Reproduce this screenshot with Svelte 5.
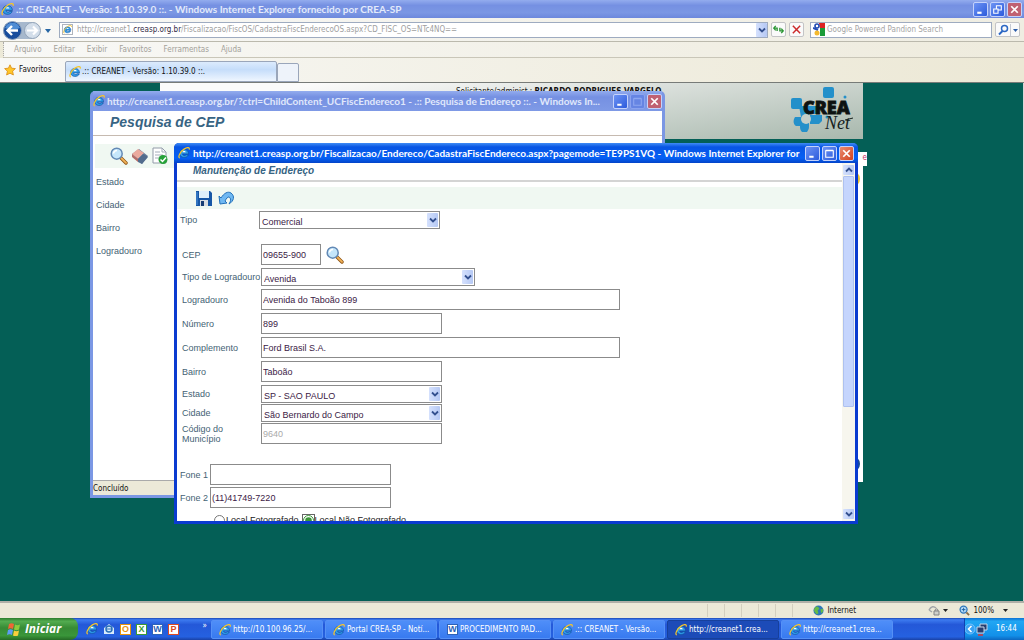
<script lang="ts">
	let address = $state({
		type: 'Comercial',
		cep: '09655-900',
		streetType: 'Avenida',
		phone1: '',
		phone2: '(11)41749-7220',
		photo: 'no'
	});
	const menus = ['Arquivo', 'Editar', 'Exibir', 'Favoritos', 'Ferramentas', 'Ajuda'];
	const fields = [
		{ id: 'logradouro', label: 'Logradouro', value: 'Avenida do Taboão 899', size: 'long' },
		{ id: 'numero', label: 'Número', value: '899', size: 'mid' },
		{ id: 'complemento', label: 'Complemento', value: 'Ford Brasil S.A.', size: 'long' },
		{ id: 'bairro', label: 'Bairro', value: 'Taboão', size: 'mid' }
	];
	const tasks = [
		{ text: 'http://10.100.96.25/...', icon: 'ie' },
		{ text: 'Portal CREA-SP - Notí...', icon: 'ie' },
		{ text: 'PROCEDIMENTO PAD...', icon: 'word' },
		{ text: '.:: CREANET - Versão...', icon: 'ie' },
		{ text: 'http://creanet1.crea...', icon: 'ie', active: true },
		{ text: 'http://creanet1.crea...', icon: 'ie' }
	];
	const office = [
		{ letter: 'O', color: '#e8930c' },
		{ letter: 'X', color: '#3c9a35' },
		{ letter: 'W', color: '#2d62b8' },
		{ letter: 'P', color: '#dc4a24' }
	];
</script>

{#snippet ie(size)}
	<svg class="icon" width={size} height={size} viewBox="0 0 16 16" aria-hidden="true">
		<path d="M14 9.200H6c.4 2.600 3.800 2.800 4.800 1.200h3C12 15.600 2.200 15.200 2.200 8.500 2.200 1.400 14.200 1.200 14 9.200z" fill="#2f9be8" stroke="#0c4b9b" stroke-width=".8" />
		<path d="M6 6.900h4.400c-.4-2-3.800-2.200-4.400 0z" fill="#fff" />
		<path d="M2.500 14.500C-1 14 3 6 8.500 2.500 12 .3 15.800-.3 15 3.500" fill="none" stroke="#f5c52c" stroke-width="1.600" />
	</svg>
{/snippet}

{#snippet lens(size)}
	<svg class="icon" width={size} height={size} viewBox="0 0 18 18" aria-hidden="true">
		<path d="M10.500 10.500l5.500 5.500" stroke="#8f5513" stroke-width="3.400" stroke-linecap="round" />
		<path d="M11.500 11.300l4.500 4.500" stroke="#f2b35a" stroke-width="1.900" stroke-linecap="round" />
		<circle cx="6.700" cy="6.700" r="5.500" fill="#c5e6fb" stroke="#6389b5" stroke-width="1.500" />
		<path d="M3.500 6.500c.3-2 1.500-3 3.500-3" fill="none" stroke="#fff" stroke-width="1.500" />
	</svg>
{/snippet}

{#snippet chevron(up)}
	<svg class="icon" width="8" height="6" viewBox="0 0 8 6" aria-hidden="true">
		<path d={up ? 'M1 4.500l3-3 3 3' : 'M1 1.500l3 3 3-3'} fill="none" stroke="#33508f" stroke-width="1.800" />
	</svg>
{/snippet}

{#snippet combo(id, value, size)}
	<div class="combo {size}">
		<select {id}><option>{value}</option></select>
		<span class="drop">{@render chevron(false)}</span>
	</div>
{/snippet}

{#snippet controls(middle, muted)}
	<div class="controls">
		<button aria-label="Minimizar"><svg viewBox="0 0 12 12"><path d="M3 9h4" stroke="#fff" stroke-width="2" /></svg></button>
		<button aria-label="Maximizar" class:muted>
			<svg viewBox="0 0 12 12" fill="none" stroke={muted ? '#8da6f0' : '#fff'}>
				{#if middle === 'restore'}
					<path d="M2.500 5.500h4v4h-4zM5 5V2.500h4.500v4H7" />
				{:else}
					<path d="M2.500 3.500h7v6h-7zM2.500 3h7" />
				{/if}
			</svg>
		</button>
		<button aria-label="Fechar" class="close"><svg viewBox="0 0 12 12"><path d="M3 3l6 6M9 3L3 9" stroke="#fff" stroke-width="1.600" /></svg></button>
	</div>
{/snippet}

<div class="screen">
	<header class="titlebar">
		{@render ie(13)}
		<span class="title">.:: CREANET - Versão: 1.10.39.0 ::. - Windows Internet Explorer fornecido por CREA-SP</span>
		{@render controls('restore', false)}
	</header>

	<div class="addressbar">
		<svg class="nav-buttons" width="54" height="22" viewBox="0 0 54 22" aria-hidden="true">
			<rect x="3" y="3" width="37" height="17" rx="8.500" fill="#a6b8cd" />
			<circle cx="12.500" cy="11.500" r="9" fill="#174c9c" stroke="#8fa3bd" />
			<path d="M5 9a8 8 0 0 1 15 0c-5 2-10 2-15 0z" fill="#4f8cd4" />
			<path d="M18 11.500H8M12 7l-4.500 4.500L12 16" fill="none" stroke="#fff" stroke-width="2.400" />
			<circle cx="32.500" cy="11.500" r="8" fill="#d3deea" stroke="#93a4b8" />
			<path d="M27 11.500h9M33 7.500l4 4-4 4" fill="none" stroke="#fff" stroke-width="2.200" />
			<path d="M45 10h6l-3 4z" fill="#2766a4" />
		</svg>
		<div class="urlbox">
			<span class="page">{@render ie(9)}</span>
			<span class="url">http://creanet1.<b>creasp.org.br</b>/Fiscalizacao/FiscOS/CadastraFiscEnderecoOS.aspx?CD_FISC_OS=NTc4NQ==</span>
			<span class="drop">{@render chevron(false)}</span>
		</div>
		<button class="tool" aria-label="Atualizar">
			<svg width="11" height="11" viewBox="0 0 12 12" fill="none" stroke="#2b9634" stroke-width="1.500"><path d="M4.500 7.500V4.500H1M3 2L.8 4.500 3 7M7.500 4v3.500H11M9 5l2.200 2.500L9 10" /></svg>
		</button>
		<button class="tool" aria-label="Parar">
			<svg width="11" height="11" viewBox="0 0 12 12"><path d="M2 2l8 8M10 2l-8 8" stroke="#cc2929" stroke-width="1.600" /></svg>
		</button>
		<div class="search">
			<svg width="12" height="13" viewBox="0 0 12 13" aria-hidden="true">
				<path d="M6 0h6v5H7z" fill="#dd2222" /><path d="M7 5h5v8H7z" fill="#1b9b38" />
				<circle cx="4" cy="3" r="2" fill="none" stroke="#244eb5" stroke-width="1.600" />
				<path d="M0 5l5 2" stroke="#244eb5" stroke-width="2" />
				<circle cx="4" cy="10" r="2.500" fill="#f4b92f" />
			</svg>
			<input aria-label="Busca" placeholder="Google Powered Pandion Search" />
		</div>
		<button class="tool go" aria-label="Buscar">
			<svg width="22" height="12" viewBox="0 0 22 12"><circle cx="7.500" cy="4.500" r="3" fill="none" stroke="#2b67c4" stroke-width="1.500" /><path d="M5.500 7L2 10.500" stroke="#2b67c4" stroke-width="2" /><path d="M13.500 0v12" stroke="#c5c9d2" /><path d="M16 5h5l-2.500 3z" fill="#2b5ca8" /></svg>
		</button>
	</div>

	<nav class="menubar">
		{#each menus as menu}
			<a href="#{menu.toLowerCase()}">{menu}</a>
		{/each}
	</nav>

	<div class="tabs">
		<button class="favorites">
			<svg width="12" height="12" viewBox="0 0 12 12" aria-hidden="true"><path d="M6 .8l1.600 3.400 3.800.4-2.800 2.600.8 3.800L6 9.200 2.600 11l.8-3.800L.6 4.600l3.800-.4z" fill="#ffc629" stroke="#d98a12" stroke-width=".8" /></svg>
			Favoritos
		</button>
		<button class="tab">{@render ie(12)}.:: CREANET - Versão: 1.10.39.0 ::.</button>
		<button class="new-tab" aria-label="Nova guia"></button>
	</div>

	<main class="desktop">
		<div class="site">
			<div class="banner">
				<span class="user">Solicitante/administ.: <b>RICARDO RODRIGUES VARGELO</b></span>
				<svg class="logo" width="66" height="50" viewBox="0 0 66 50" role="img" aria-label="CREA Net">
					<g fill="#2490ca">
						<rect x="33" y="1" width="11" height="11" rx="2" />
						<rect x="1" y="12" width="11" height="11" rx="2" />
						<path d="M9 20h19v8h-9v12c0 2 0 3-2 6h-5c-2-2-2-4-2-6H6c-3-2-3-6-1-9h6z" />
						<path d="M20 29h12v6l-3 3h-9z" />
						<circle cx="55" cy="11" r="1.500" />
						<circle cx="37" cy="31" r="1.500" />
					</g>
					<circle cx="16" cy="33" r="5" fill="#c3cec8" />
					<text class="crea" x="13" y="28">CREA</text>
					<text class="net" x="35" y="43">Net</text>
					<path d="M55 34l8-2" fill="none" stroke="#15211d" />
				</svg>
			</div>
			<div class="strip">e</div>
			<div class="sheet">
				<span class="dot yellow"></span>
				<span class="dot blue"></span>
			</div>
		</div>

		<section class="window back" aria-label="Pesquisa de Endereço">
			<div class="caption">
				{@render ie(12)}
				<span class="title">http://creanet1.creasp.org.br/?ctrl=ChildContent_UCFiscEndereco1 - .:: Pesquisa de Endereço ::. - Windows In...</span>
				{@render controls('max', true)}
			</div>
			<div class="body">
				<h1>Pesquisa de CEP</h1>
				<div class="toolbar">
					<button aria-label="Pesquisar">{@render lens(18)}</button>
					<button aria-label="Limpar">
						<svg width="18" height="17" viewBox="0 0 18 17"><path d="M1 6l7-5 9 7-6 8z" fill="#667e9b" /><path d="M1 6l6-5 6 4-6 6z" fill="#eba99d" /><path d="M1 6v3l6 5V11z" fill="#b36b67" /><path d="M7 11l5-5 5 3-6 7-4-2z" fill="#526c8d" /></svg>
					</button>
					<button aria-label="Confirmar">
						<svg width="16" height="18" viewBox="0 0 16 18"><path d="M1 1h9l4 4v11H1z" fill="#fff" stroke="#929ba8" /><path d="M10 1v4h4M3 5h5M3 8h8M3 11h6" fill="none" stroke="#a4adb9" /><circle cx="11" cy="12.500" r="4.500" fill="#26a138" /><path d="M8.500 12.500l2 2 3.500-4" fill="none" stroke="#fff" stroke-width="1.500" /></svg>
					</button>
				</div>
				<ul>
					<li>Estado</li>
					<li>Cidade</li>
					<li>Bairro</li>
					<li>Logradouro</li>
				</ul>
			</div>
			<div class="statusline">Concluído</div>
		</section>

		<section class="window front" aria-label="Manutenção de Endereço">
			<div class="caption">
				{@render ie(12)}
				<span class="title">http://creanet1.creasp.org.br/Fiscalizacao/Endereco/CadastraFiscEndereco.aspx?pagemode=TE9PS1VQ - Windows Internet Explorer for</span>
				{@render controls('max', false)}
			</div>
			<div class="body">
				<div class="content">
					<h2>Manutenção de Endereço</h2>
					<div class="toolbar">
						<button aria-label="Salvar">
							<svg width="16" height="16" viewBox="0 0 16 16"><path d="M0 1h14l2 2v13H0z" fill="#1757a6" /><path d="M3 1h10v7H3z" fill="#dff0fb" /><path d="M4 10h8v6H4z" fill="#d9dde1" /><path d="M5 11h3v5H5z" fill="#183d74" /><path d="M1 2v13" stroke="#4e93da" /></svg>
						</button>
						<button aria-label="Desfazer">
							<svg width="16" height="15" viewBox="0 0 16 15"><path d="M1 5l1 8 7-1-2-2c2-4 4-5 5-3 1 1 1 3-1 6 5-3 6-8 2-11-3-2-7 0-10 5z" fill="#6fb8f2" stroke="#2370b9" /></svg>
						</button>
					</div>
					<form>
						<div class="row type">
							<label for="tipo">Tipo</label>
							{@render combo('tipo', address.type, 'mid')}
						</div>
						<div class="grid">
							<label for="cep">CEP</label>
							<div class="cep">
								<input id="cep" bind:value={address.cep} />
								<button type="button" aria-label="Pesquisar CEP">{@render lens(18)}</button>
							</div>
							<label for="tipoLogradouro">Tipo de Logradouro</label>
							{@render combo('tipoLogradouro', address.streetType, 'wide')}
							{#each fields as field}
								<label for={field.id}>{field.label}</label>
								<input id={field.id} class={field.size} value={field.value} />
							{/each}
						</div>
						<div class="grid region">
							<label for="estado">Estado</label>
							{@render combo('estado', 'SP - SAO PAULO', 'mid')}
							<label for="cidade">Cidade</label>
							{@render combo('cidade', 'São Bernardo do Campo', 'mid')}
							<label for="codigo">Código do Município</label>
							<input id="codigo" class="mid" value="9640" disabled />
						</div>
						<div class="phones">
							<label for="fone1">Fone 1</label>
							<input id="fone1" class="mid" bind:value={address.phone1} />
							<label for="fone2">Fone 2</label>
							<input id="fone2" class="mid" bind:value={address.phone2} />
						</div>
						<div class="photo">
							<label><input type="radio" name="photo" value="yes" bind:group={address.photo} />Local Fotografado</label>
							<label><input type="radio" name="photo" value="no" bind:group={address.photo} />Local Não Fotografado</label>
						</div>
					</form>
				</div>
				<div class="scrollbar">
					<span class="drop">{@render chevron(true)}</span>
					<span class="thumb"></span>
					<span class="drop end">{@render chevron(false)}</span>
				</div>
			</div>
		</section>
	</main>

	<div class="statusbar">
		<span class="cells"></span>
		<span class="zone">
			<svg width="11" height="11" viewBox="0 0 12 12" aria-hidden="true"><circle cx="6" cy="6" r="5.500" fill="#2d77b8" /><path d="M2 3c3-3 4 0 5 1L5 6l1 3-2 1C2 8 0 6 2 3zM8 5l3-1v3L9 9z" fill="#66bb45" /></svg>
			Internet
		</span>
		<span class="guard">
			<svg width="20" height="11" viewBox="0 0 20 11" aria-hidden="true"><path d="M1 5c2-4 5-4 7-2M1 5l3 2" fill="none" stroke="#a2a5a8" stroke-width="1.500" /><path d="M6 6h5v4H6zM7 6c0-3 3-3 3 0" fill="#d1d1cc" stroke="#858585" /><path d="M15 4h5l-2.500 3z" fill="#222" /></svg>
		</span>
		<span class="zoom">
			<svg width="11" height="11" viewBox="0 0 12 12" aria-hidden="true"><circle cx="5" cy="5" r="3.800" fill="#b5daf7" stroke="#2e76ba" stroke-width="1.400" /><path d="M8 8l3 3" stroke="#8b6d45" stroke-width="2" /><path d="M3 5h4M5 3v4" stroke="#1d5fa0" /></svg>
			100%
			<svg class="caret" width="5" height="3" viewBox="0 0 5 3" aria-hidden="true"><path d="M0 0h5L2.500 3z" fill="#222" /></svg>
		</span>
	</div>

	<footer class="taskbar">
		<button class="start">
			<svg width="14" height="14" viewBox="0 0 14 14" aria-hidden="true"><path d="M2 2q2.500-1.500 5 0L6 7Q3.500 5.500 1 7z" fill="#ef6636" /><path d="M8 2.500q2.500 1.500 5 0L12 7.500q-2.500 1.500-5 0z" fill="#8ccc3c" /><path d="M1 8q2.500-1.500 5 0l-1 5Q2.500 11.500 0 13z" fill="#5d9cf5" /><path d="M7 8.500q2.500 1.500 5 0l-1 5q-2.500 1.500-5 0z" fill="#f9cf3d" /></svg>
			Iniciar
		</button>
		<div class="quick">
			{@render ie(12)}
			<svg width="12" height="12" viewBox="0 0 12 12" aria-hidden="true"><path d="M1 5l5-4 5 4v6H1z" fill="#d8ebfc" /><circle cx="6" cy="6" r="3" fill="none" stroke="#286fb7" stroke-width="1.500" /><path d="M4 6h5" stroke="#286fb7" /></svg>
			{#each office as app}
				<span class="app" style="color: {app.color}; border-color: {app.color}">{app.letter}</span>
			{/each}
			<span class="more">»</span>
		</div>
		<div class="tasks">
			{#each tasks as task}
				<button class:active={task.active}>
					{#if task.icon === 'word'}
						<span class="app word">W</span>
					{:else}
						{@render ie(12)}
					{/if}
					<span>{task.text}</span>
				</button>
			{/each}
		</div>
		<div class="tray">
			<svg width="24" height="14" viewBox="0 0 24 14" aria-hidden="true"><circle cx="5" cy="7" r="5" fill="#39a2f4" stroke="#8fd0ff" stroke-width=".7" /><path d="M6.500 4l-3 3 3 3" fill="none" stroke="#fff" stroke-width="1.500" /><path d="M15 2h7v6h-7z" fill="#263e70" stroke="#c6d5e7" /><path d="M12 5h7v6h-7z" fill="#263e70" stroke="#c6d5e7" /><path d="M13 13h5" stroke="#d33" stroke-width="1.500" /></svg>
			<time>16:44</time>
		</div>
	</footer>
</div>

<style>
	:global(body) {
		margin: 0;
		overflow: hidden;
	}
	.screen {
		display: flex;
		flex-direction: column;
		height: 100vh;
		overflow: hidden;
		background: #ece9d8;
		font: 8px/12px 'DejaVu Sans Condensed', 'Noto Sans', sans-serif;
		color: #111;
		white-space: nowrap;
	}
	* {
		box-sizing: border-box;
	}
	button {
		display: flex;
		align-items: center;
		flex: none;
		margin: 0;
		padding: 0;
		border: 0;
		background: none;
		font: inherit;
		color: inherit;
	}
	svg {
		display: block;
		flex: none;
	}
	input,
	select {
		margin: 0;
		border-radius: 0;
		font: inherit;
		color: inherit;
	}
	.titlebar {
		display: flex;
		align-items: center;
		gap: 2px;
		flex: none;
		height: 18px;
		padding: 0 2px 0 1px;
		background: linear-gradient(#93acee, #7590e2 30%, #7b97e4 70%, #6d88dc);
		color: #e3eafb;
	}
	.title {
		flex: 1;
		min-width: 0;
		overflow: hidden;
		font: bold 10px/14px 'Lato', sans-serif;
	}
	.controls {
		display: flex;
		gap: 2px;
	}
	.controls button {
		width: 15px;
		height: 15px;
		border: 1px solid #c4d2fb;
		border-radius: 2px;
		background: linear-gradient(135deg, #6d93f4, #2c5bdc);
	}
	.controls .close {
		background: linear-gradient(135deg, #e98b70, #d3431f);
	}
	.controls .muted {
		border-color: #8ba3ef;
		background: #6685e3;
	}
	.controls svg {
		width: 100%;
	}
	.titlebar .close,
	.back .close {
		background: #c06172;
	}
	.addressbar {
		display: flex;
		align-items: center;
		gap: 3px;
		flex: none;
		height: 24px;
		padding-right: 4px;
		border-bottom: 1px solid #bbb9ad;
		background: linear-gradient(90deg, #f8f8f6, #efede2);
	}
	.urlbox,
	.search {
		display: flex;
		align-items: center;
		height: 16px;
		border: 1px solid #9eabc0;
		background: #fff;
	}
	.urlbox {
		flex: 1;
		gap: 4px;
		margin-left: 2px;
		color: #a0a0a0;
	}
	.urlbox b {
		font-weight: normal;
		color: #332b45;
	}
	.page {
		margin-left: 2px;
		border: 1px solid #b0b5bd;
	}
	.url {
		flex: 1;
	}
	.drop {
		display: flex;
		align-items: center;
		justify-content: center;
		flex: none;
		width: 11px;
		height: 14px;
		border-radius: 1px;
		background: linear-gradient(90deg, #d5e1fd, #b5c8f4);
	}
	.tool {
		justify-content: center;
		width: 15px;
		height: 15px;
		border: 1px solid #c3c4c6;
		border-radius: 2px;
		background: #fafafa;
	}
	.search {
		width: 182px;
		gap: 2px;
		margin-left: 3px;
		padding-left: 2px;
	}
	.search input {
		width: 160px;
		padding: 0;
		border: 0;
		background: none;
	}
	.search input::placeholder {
		color: #a5a5a5;
		opacity: 1;
	}
	.go {
		width: 25px;
	}
	.menubar {
		display: flex;
		gap: 12px;
		align-items: center;
		flex: none;
		height: 16px;
		padding-left: 10px;
		margin-left: 3px;
		border-left: 1px dotted #aaa;
		border-bottom: 1px solid #c9c6b8;
		background: linear-gradient(90deg, #f8f8f6, #eeebdd);
	}
	.menubar a {
		color: #a3a19a;
		text-decoration: none;
	}
	.tabs {
		display: flex;
		align-items: flex-end;
		flex: none;
		height: 25px;
		padding-top: 2px;
		border-bottom: 1px solid #777b78;
		background: linear-gradient(90deg, #f8f8f6, #ece8d5);
	}
	.favorites {
		gap: 3px;
		width: 65px;
		height: 24px;
		padding: 0 4px;
	}
	.tab {
		gap: 1px;
		width: 212px;
		height: 21px;
		padding-left: 3px;
		border: 1px solid #9aa6ba;
		border-radius: 2px 2px 0 0;
		background: linear-gradient(#dcebfd, #c5ddfa 40%, #eff6ff);
	}
	.new-tab {
		width: 22px;
		height: 19px;
		border: 1px solid #9aa6ba;
		border-radius: 2px 2px 0 0;
		background: #eef3fa;
	}
	.desktop {
		position: relative;
		flex: 1;
		min-height: 0;
		overflow: hidden;
		border-right: 1px solid #d8d8d8;
		background: #045f56;
	}
	.site {
		width: 703px;
		margin: 0 auto;
	}
	.banner {
		position: relative;
		display: flex;
		justify-content: flex-end;
		height: 56px;
		padding: 3px 7px;
		background: linear-gradient(172deg, #fbfbfa 15%, #dde2de 45%, #a8b8ad);
	}
	.user {
		position: absolute;
		left: 296px;
		top: 3px;
	}
	.crea {
		font: 800 18px 'Open Sans', sans-serif;
		fill: #0d1211;
		stroke: #0d1211;
		stroke-width: 0.8px;
	}
	.net {
		font: italic 18px 'Liberation Serif', serif;
		fill: #15211d;
	}
	.strip {
		height: 14px;
		margin: 13px -4px 0 0;
		background: #fff;
		text-align: right;
		color: #c36;
	}
	.sheet {
		position: relative;
		height: 316px;
		background: #fff;
	}
	.dot {
		position: absolute;
		right: 3px;
		width: 18px;
		height: 18px;
		border-radius: 9px;
	}
	.yellow {
		top: 4px;
		background: #ecc42e;
	}
	.blue {
		bottom: 9px;
		background: #144b9b;
	}
	.window {
		position: absolute;
		display: flex;
		flex-direction: column;
		border-radius: 5px 5px 0 0;
		overflow: hidden;
	}
	.caption {
		display: flex;
		align-items: center;
		flex: none;
	}
	.back {
		left: 90px;
		top: 8px;
		width: 575px;
		height: 407px;
		padding: 0 3px 3px;
		background: #7b97e4;
	}
	.back .caption {
		height: 20px;
		gap: 2px;
		background: linear-gradient(#93acee, #7590e2 30%, #7f9ae6);
		color: #e0e8fb;
	}
	.body {
		flex: 1;
		min-height: 0;
		background: #fff;
	}
	h1,
	h2 {
		margin: 0;
		font: italic bold 14px/16px 'Liberation Sans', sans-serif;
		color: #376483;
	}
	h1 {
		height: 25px;
		padding: 3px 17px;
		border-bottom: 1px solid #c6bab0;
	}
	.toolbar {
		display: flex;
		align-items: center;
		background: #f0f8f2;
	}
	.back .toolbar {
		gap: 3px;
		height: 24px;
		margin: 8px 2px 0;
		padding-left: 15px;
	}
	ul {
		display: flex;
		flex-direction: column;
		gap: 11px;
		margin: 0;
		padding: 8px 3px;
		list-style: none;
	}
	ul,
	.content {
		font: 9px/12px 'Liberation Sans', sans-serif;
		color: #446274;
	}
	.statusline {
		height: 15px;
		border-top: 1px solid #aaa;
		background: #ece9d8;
		line-height: 15px;
	}
	.front {
		left: 174px;
		top: 60px;
		width: 684px;
		height: 381px;
		padding: 0 3px 3px;
		background: #0a3bd0;
	}
	.front .caption {
		height: 20px;
		gap: 3px;
		margin: 0 -3px;
		padding: 0 4px;
		background: linear-gradient(#3f8cf5, #0855e3 20%, #0560f5 75%, #0344c8);
		color: #fff;
	}
	.front .body {
		display: flex;
	}
	.content {
		flex: 1;
		min-width: 0;
		overflow: hidden;
	}
	h2 {
		height: 19px;
		padding: 2px 16px;
		border-bottom: 2px solid #d4d4d4;
		font-size: 10px;
		line-height: 12px;
	}
	.front .toolbar {
		gap: 6px;
		height: 22px;
		margin: 5px 0 2px;
		padding-left: 19px;
	}
	form {
		padding: 0 3px;
	}
	.row {
		display: grid;
		grid-template-columns: 79px 1fr;
		align-items: center;
	}
	.grid {
		display: grid;
		grid-template-columns: 79px 1fr;
		gap: 3px 0;
		align-items: center;
		margin: 15px 2px 3px;
	}
	.grid.region {
		row-gap: 1px;
		margin-top: 3px;
	}
	.grid label {
		white-space: normal;
		line-height: 10px;
	}
	.grid label[for='tipoLogradouro'] {
		white-space: nowrap;
	}
	.content input:not([type='radio']) {
		height: 21px;
		padding: 0 1px;
		border: 1px solid #8b8b8b;
		background: #fff;
		color: #3b2145;
	}
	.content input:disabled {
		color: #aaa;
	}
	.cep {
		display: flex;
		align-items: center;
		gap: 5px;
	}
	.cep input {
		width: 60px;
	}
	.mid {
		width: 181px;
	}
	.wide {
		width: 214px;
	}
	.long {
		width: 359px;
	}
	.combo {
		display: flex;
		align-items: center;
		height: 18px;
		padding-right: 1px;
		border: 1px solid #8b8b8b;
		color: #3b2145;
	}
	.combo select {
		flex: 1;
		height: 16px;
		padding: 3px 2px 0;
		border: 0;
		background: none;
		appearance: none;
	}
	.phones {
		display: grid;
		grid-template-columns: 30px 1fr;
		gap: 2px 0;
		align-items: center;
		margin-top: 20px;
	}
	.photo {
		display: flex;
		gap: 4px;
		padding: 6px 0 0 34px;
		color: #222;
	}
	.photo label {
		display: flex;
		align-items: center;
	}
	.photo input {
		width: 11px;
		height: 11px;
		margin-right: 1px;
		accent-color: #3a9637;
	}
	.photo input:checked {
		outline: 1px solid #666;
	}
	.scrollbar {
		display: flex;
		flex-direction: column;
		flex: none;
		gap: 1px;
		width: 13px;
		padding: 2px 1px;
		background: #f7f6ee;
	}
	.scrollbar .drop {
		height: 10px;
	}
	.thumb {
		height: 231px;
		border: 1px solid #aec1ef;
		border-radius: 1px;
		background: #c5d5fd;
	}
	.end {
		margin-top: auto;
	}
	.statusbar {
		display: flex;
		align-items: center;
		flex: none;
		height: 17px;
		padding-right: 16px;
		border-top: 2px solid #b1b0a8;
	}
	.statusbar span:not(.cells) {
		display: flex;
		align-items: center;
		gap: 3px;
	}
	.cells {
		width: 102px;
		height: 13px;
		margin-left: auto;
		background: repeating-linear-gradient(90deg, #d4d0c0 0 1px, transparent 1px 17px);
	}
	.statusbar .zone {
		width: 119px;
		padding-left: 4px;
	}
	.zoom {
		margin-left: 11px;
	}
	.caret {
		margin-left: 6px;
	}
	.taskbar {
		display: flex;
		flex: none;
		height: 22px;
		background: linear-gradient(#1d48b3, #3d7bf0 8%, #2458d8 30%, #2561e0 85%, #1941a5);
		color: #fff;
	}
	.start {
		gap: 4px;
		width: 78px;
		padding-left: 7px;
		border-radius: 0 8px 8px 0;
		background: linear-gradient(#2c7d2e, #53ac50 15%, #378b35 45%, #3a963a 80%, #256a25);
		font: italic bold 12px/16px 'Open Sans', sans-serif;
	}
	.quick {
		display: flex;
		align-items: center;
		gap: 5px;
		width: 133px;
		padding-left: 8px;
	}
	.app {
		width: 11px;
		height: 11px;
		border: 1px solid;
		background: #fff;
		font: bold 9px/9px 'Liberation Sans', sans-serif;
		text-align: center;
	}
	.more {
		margin: 0 4px 6px auto;
	}
	.tasks {
		display: flex;
		flex: 1;
		gap: 2px;
		padding: 2px 0 1px;
	}
	.tasks button {
		gap: 2px;
		width: 112px;
		padding-left: 7px;
		border: 1px solid #5590f6;
		border-radius: 2px;
		background: linear-gradient(#4f8ef8, #387af0);
	}
	.tasks .active {
		border-color: #17409c;
		background: #1c4bb8;
	}
	.word {
		border-color: #2d62b8;
		color: #2d62b8;
	}
	.tray {
		display: flex;
		align-items: center;
		gap: 7px;
		width: 60px;
		border-left: 1px solid #1042af;
		background: linear-gradient(#0e72d4, #21a6f3 15%, #1290e9 80%, #0d67c0);
	}
</style>
